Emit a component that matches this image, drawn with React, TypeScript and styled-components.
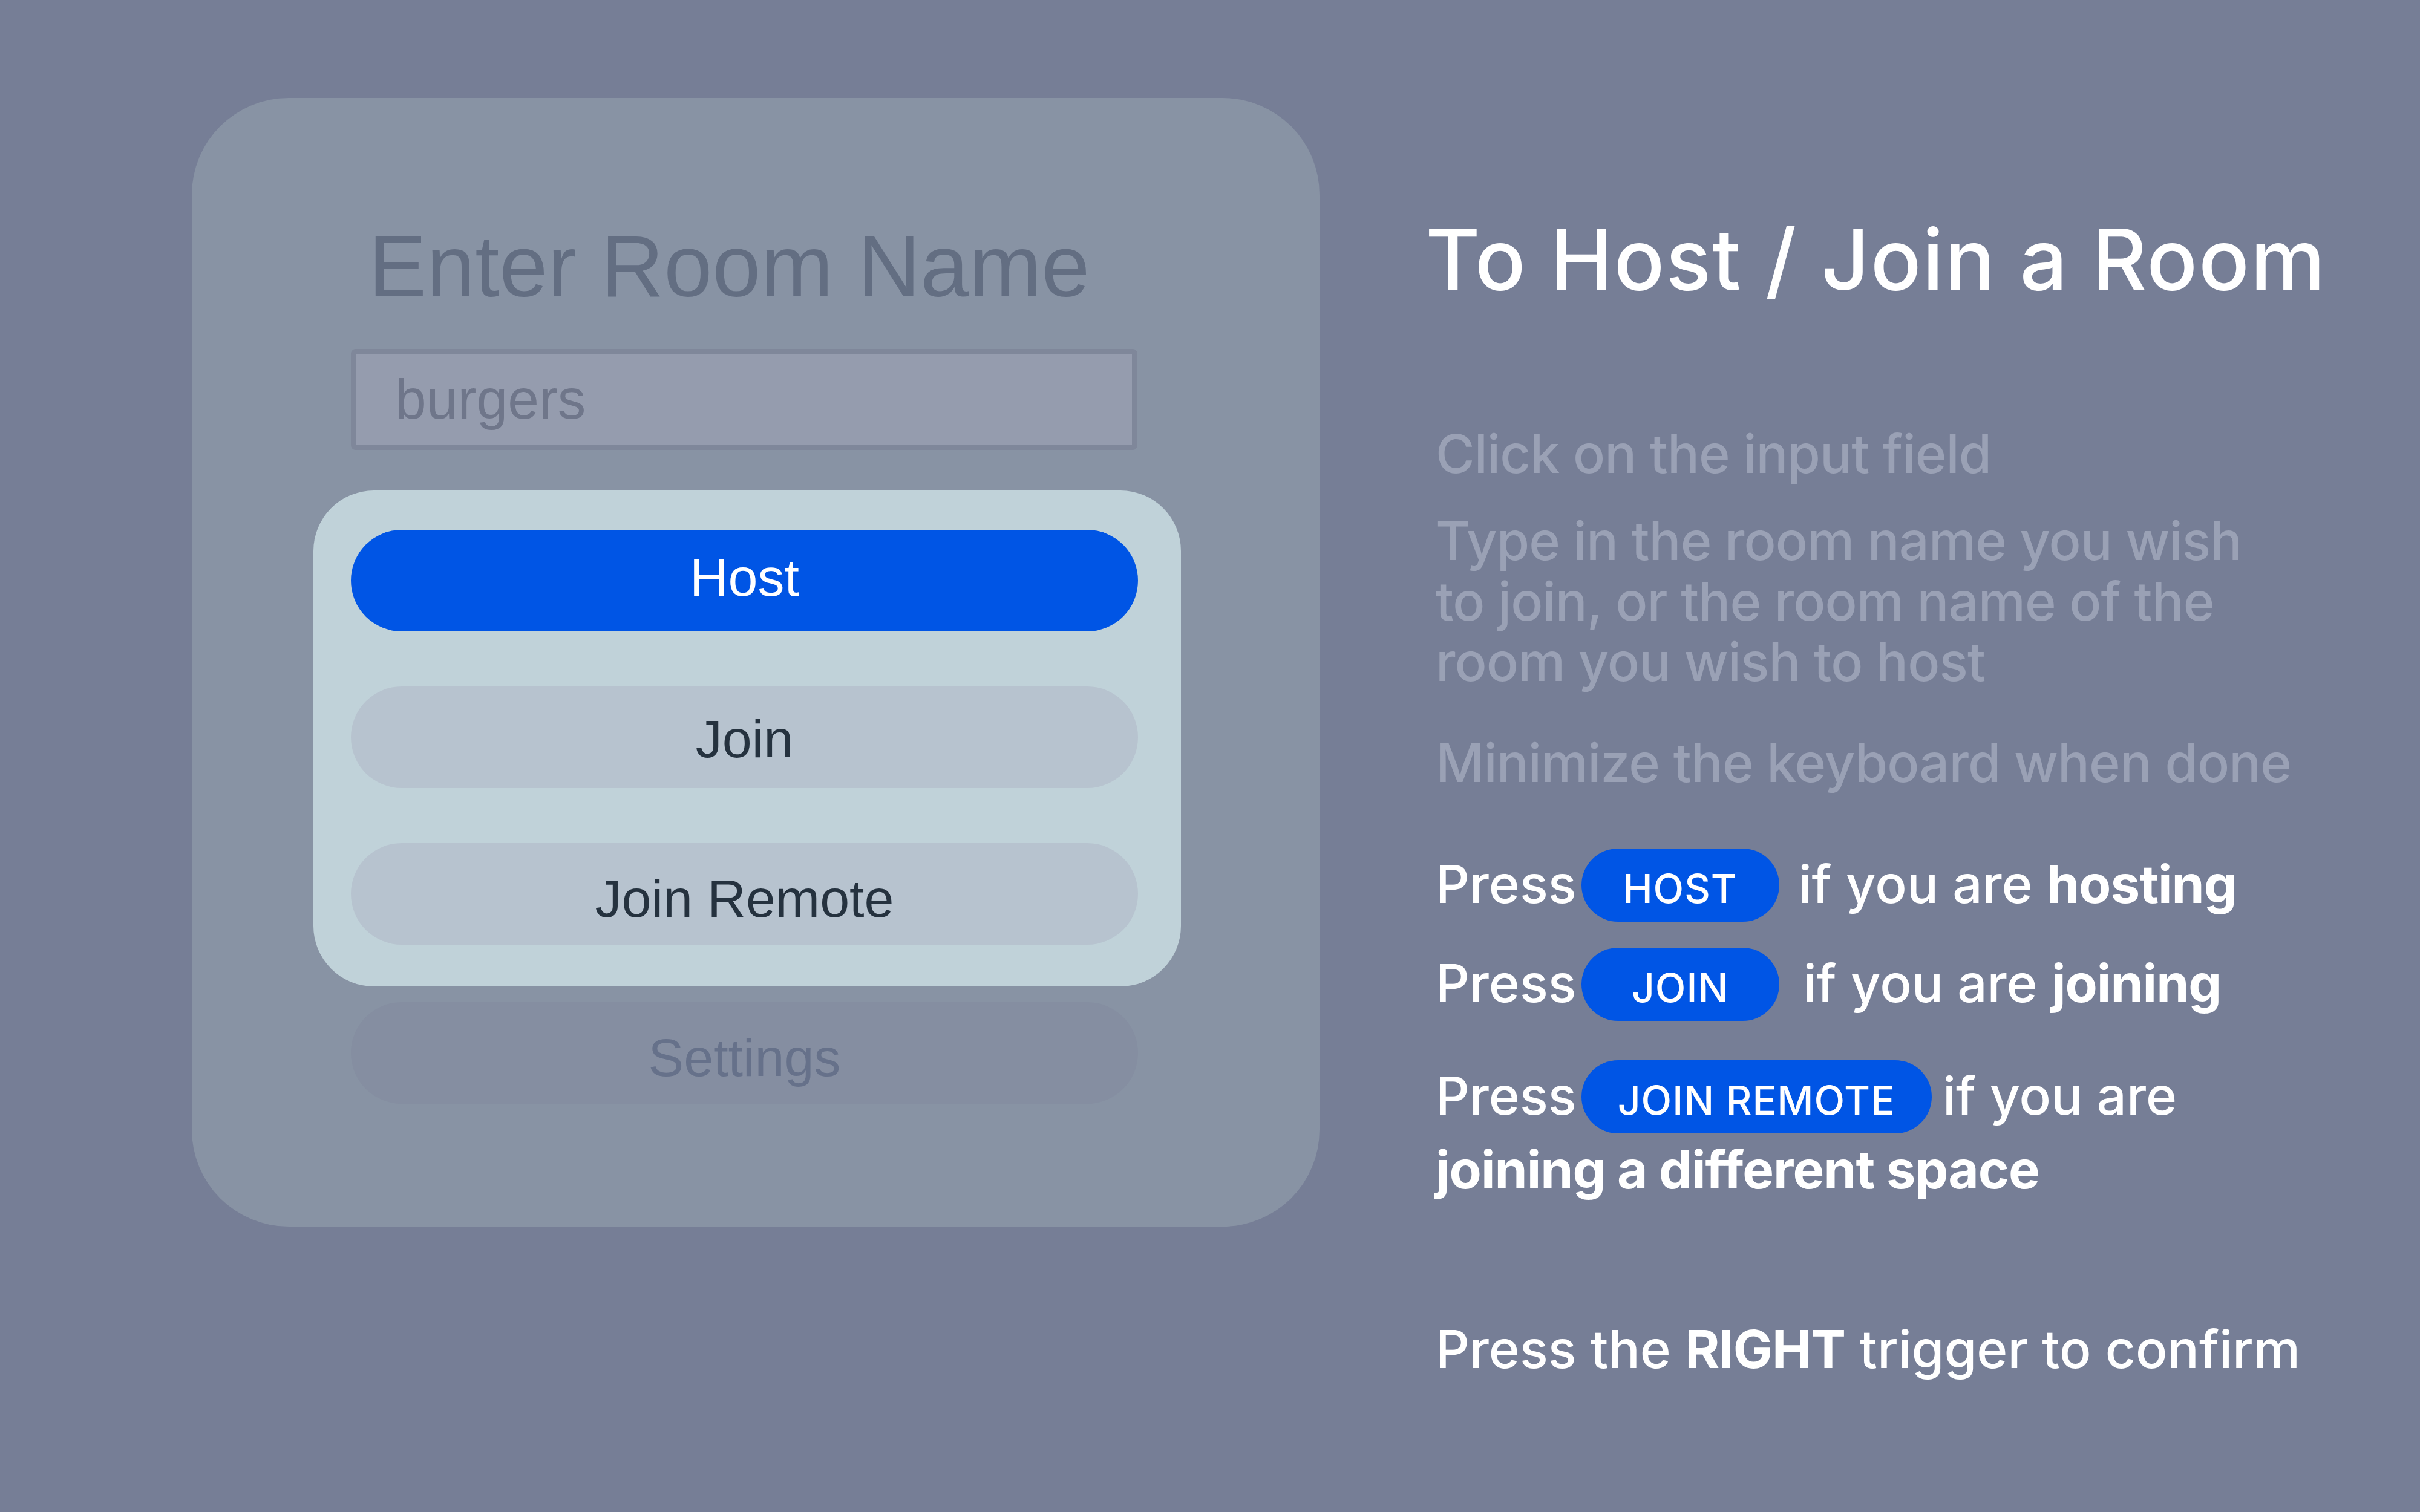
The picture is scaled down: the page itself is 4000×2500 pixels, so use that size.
import React from "react";
import styled, { createGlobalStyle } from "styled-components";

const Global = createGlobalStyle`
  html, body {
    margin: 0;
    padding: 0;
    background: #767e96;
  }
  #root {
    width: 4000px;
    height: 2500px;
    overflow: hidden;
  }
`;

const Page = styled.main`
  box-sizing: border-box;
  width: 4000px;
  height: 2500px;
  display: flex;
  align-items: flex-start;
  gap: 192px;
  padding: 162px 0 0 317px;
  background: #767e96;
`;

const Card = styled.section`
  box-sizing: border-box;
  width: 1864px;
  height: 1866px;
  flex: none;
  border-radius: 160px;
  background: #8893a4;
  padding: 0 301px 0 263px;
  display: flex;
  flex-direction: column;
  font-family: "Liberation Sans", Arial, sans-serif;
`;

const CardTitle = styled.h1`
  margin: 207px 0 0 29px;
  font-size: 144px;
  line-height: 144px;
  font-weight: 400;
  color: #636e82;
  white-space: nowrap;
`;

const RoomInput = styled.input`
  box-sizing: border-box;
  margin-top: 64px;
  width: 1300px;
  height: 167px;
  border: 9px solid #7f879a;
  border-radius: 8px;
  background: #959cae;
  padding: 0 0 0 64px;
  font-family: "Liberation Sans", Arial, sans-serif;
  font-size: 93px;
  color: #6f768a;
  outline: none;
`;

const ButtonPanel = styled.div`
  margin: 67px -72px 0 -62px;
  padding: 65px 72px 69px 62px;
  border-radius: 100px;
  background: #c0d2d9;
  display: flex;
  flex-direction: column;
  gap: 91px;
`;

type Variant = "primary" | "secondary" | "muted";

const MenuButton = styled.button<{ $variant: Variant; $shift: number }>`
  box-sizing: border-box;
  width: 1301px;
  height: 168px;
  border: none;
  border-radius: 84px;
  display: flex;
  align-items: center;
  justify-content: center;
  padding: ${(p) => (p.$shift > 0 ? `${p.$shift * 2}px 0 0` : `0 0 ${-p.$shift * 2}px`)};
  font-family: "Liberation Sans", Arial, sans-serif;
  font-size: 88px;
  line-height: 1;
  background: ${(p) =>
    p.$variant === "primary" ? "#0055e5" : p.$variant === "secondary" ? "#b7c3cf" : "#858ea1"};
  color: ${(p) =>
    p.$variant === "primary" ? "#ffffff" : p.$variant === "secondary" ? "#25323f" : "#66718a"};
  margin-top: ${(p) => (p.$variant === "muted" ? "26px" : "0")};
`;

const Guide = styled.aside`
  display: flex;
  flex-direction: column;
  font-family: Inter, "Noto Sans", sans-serif;
  color: #ffffff;
`;

const GuideTitle = styled.h2`
  margin: 183px 0 0 -17px;
  font-size: 139px;
  line-height: 167px;
  font-weight: 500;
  letter-spacing: 1.8px;
  color: #ffffff;
  white-space: nowrap;
`;

const Step = styled.p<{ $top: number }>`
  margin: ${(p) => p.$top}px 0 0 0;
  font-size: 88px;
  line-height: 100px;
  font-weight: 500;
  letter-spacing: -0.9px;
  color: #9aa1b5;
  white-space: nowrap;
`;

const PressLine = styled.p<{ $top: number }>`
  margin: ${(p) => p.$top}px 0 0 0;
  font-size: 87px;
  line-height: 119px;
  font-weight: 500;
  color: #ffffff;
  white-space: nowrap;
`;

const Strong = styled.strong`
  font-weight: 700;
  letter-spacing: -1px;
`;

const Pill = styled.span<{ $after: number }>`
  box-sizing: border-box;
  display: inline-block;
  min-width: 327px;
  height: 121px;
  margin: 0 ${(p) => p.$after}px 0 8px;
  padding: 33px 60px 22px;
  border-radius: 61px;
  background: #0055e5;
  color: #ffffff;
  font-size: 66px;
  line-height: 66px;
  font-weight: 500;
  letter-spacing: 1px;
  text-align: center;
`;

export default function App() {
  return (
    <>
      <Global />
      <Page>
        <Card>
          <CardTitle>Enter Room Name</CardTitle>
          <RoomInput readOnly value="burgers" />
          <ButtonPanel>
            <MenuButton $variant="primary" $shift={-5}>
              Host
            </MenuButton>
            <MenuButton $variant="secondary" $shift={3}>
              Join
            </MenuButton>
            <MenuButton $variant="secondary" $shift={8}>
              Join Remote
            </MenuButton>
          </ButtonPanel>
          <MenuButton $variant="muted" $shift={8}>
            Settings
          </MenuButton>
        </Card>
        <Guide>
          <GuideTitle>To Host / Join a Room</GuideTitle>
          <Step $top={188}>Click on the input field</Step>
          <Step $top={44}>
            Type in the room name you wish
            <br />
            to join, or the room name of the
            <br />
            room you wish to host
          </Step>
          <Step $top={67}>Minimize the keyboard when done</Step>
          <PressLine $top={91}>
            Press<Pill $after={32}>HOST</Pill>if you are <Strong>hosting</Strong>
          </PressLine>
          <PressLine $top={42}>
            Press<Pill $after={40}>JOIN</Pill>if you are <Strong>joining</Strong>
          </PressLine>
          <PressLine $top={64}>
            Press<Pill $after={18}>JOIN REMOTE</Pill>if you are
            <br />
            <Strong>joining a different space</Strong>
          </PressLine>
          <PressLine $top={178}>
            Press the <Strong>RIGHT</Strong> trigger to confirm
          </PressLine>
        </Guide>
      </Page>
    </>
  );
}
